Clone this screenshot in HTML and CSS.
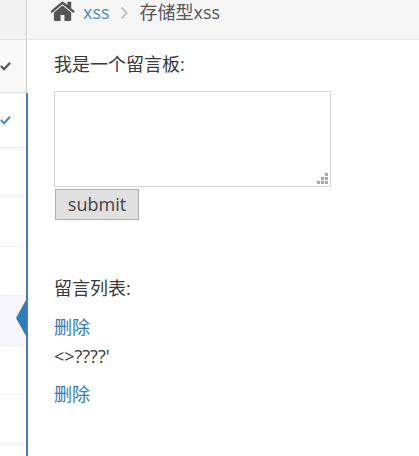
FILE: index.html
```html
<!DOCTYPE html>
<html lang="zh-CN">
<head>
  <meta charset="UTF-8" />
  <title>存储型xss</title>
  <link rel="stylesheet" href="styles.css">
</head>
<body>
  <div class="sidebar">
    <div class="side-top"></div>
    <div class="side-row side-parent">
      <svg class="check" viewBox="0 0 12 10"><path d="M1 5l3.500 3.500L11 1.500"/></svg>
    </div>
    <div class="submenu">
      <div class="side-row side-first">
        <svg class="check check-blue" viewBox="0 0 12 10"><path d="M1 5l3.500 3.500L11 1.500"/></svg>
      </div>
      <div class="side-row side-plain"></div>
      <div class="side-row side-plain"></div>
      <div class="side-row side-plain"></div>
      <div class="side-row side-active">
        <div class="arrow"></div>
      </div>
      <div class="side-row side-plain"></div>
      <div class="side-row side-plain"></div>
      <div class="side-row side-plain"></div>
    </div>
  </div>

  <div class="main">
    <div class="breadcrumbs">
      <svg class="home" viewBox="64 220 1664 1316"><path d="M1408 992v480q0 26-19 45t-45 19h-384v-384h-256v384h-384q-26 0-45-19t-19-45v-480q0-1 .5-3t.5-3l575-474 575 474q1 2 1 6zm223-69l-62 74q-8 9-21 11h-3q-13 0-21-7l-692-577-692 577q-12 8-24 7-13-2-21-11l-62-74q-8-10-7-23.500t11-21.500l719-599q32-26 76-26t76 26l244 204v-195q0-14 9-23t23-9h192q14 0 23 9t9 23v408l219 182q10 8 11 21.500t-7 23.500z"/></svg>
      <a class="crumb-link" href="#">xss</a>
      <svg class="crumb-sep" viewBox="0 0 8 14"><path d="M1.500 1.500L6.500 7l-5 5.500"/></svg>
      <span class="crumb-current">存储型xss</span>
    </div>

    <div class="content">
      <p class="label">我是一个留言板:</p>
      <div class="textarea-box">
        <textarea class="msg-input"></textarea>
        <svg class="grip" viewBox="0 0 11 11">
          <rect x="8" y="0" width="3" height="3"/>
          <rect x="4" y="4" width="3" height="3"/>
          <rect x="8" y="4" width="3" height="3"/>
          <rect x="0" y="8" width="3" height="3"/>
          <rect x="4" y="8" width="3" height="3"/>
          <rect x="8" y="8" width="3" height="3"/>
        </svg>
      </div>
      <button class="submit-btn">submit</button>

      <p class="list-title">留言列表:</p>
      <div class="msg">
        <a class="del" href="#">删除</a>
        <div class="msg-text">&lt;&gt;????'</div>
      </div>
      <div class="msg">
        <a class="del" href="#">删除</a>
      </div>
    </div>
  </div>
</body>
</html>
```

FILE: styles.css
```css
body {
  margin: 0;
  display: flex;
  height: 456px;
  overflow: hidden;
  background-color: #fff;
  font-family: "Open Sans", "Noto Sans CJK SC", sans-serif;
  font-size: 18px;
  color: #393939;
}

.sidebar {
  width: 28px;
  flex-shrink: 0;
  display: flex;
  flex-direction: column;
}

.side-top {
  height: 39px;
  flex-shrink: 0;
  margin-right: 1px;
  background-color: #f2f2f2;
  border-right: 1px solid #ccc;
  border-bottom: 1px solid #e0e0e0;
}

.side-row {
  box-sizing: border-box;
  position: relative;
  display: flex;
  align-items: center;
}

.side-parent {
  height: 53px;
  flex-shrink: 0;
  margin-right: 1px;
  background-color: #f8f8f8;
  border-right: 1px solid #ccc;
  border-bottom: 1px solid #e5e5e5;
}

.submenu {
  flex: 1;
  border-right: 2px solid #4a7fa5;
  overflow: hidden;
}

.side-first {
  height: 54.700px;
  border-bottom: 1px solid #ececec;
}

.side-plain {
  height: 49.500px;
  border-bottom: 1px solid #f0f0f0;
}

.side-active {
  height: 49.500px;
  background-color: #f5f5fb;
  border-bottom: 1px solid #f0f0f0;
}

.arrow {
  position: absolute;
  right: 0;
  top: 4px;
  width: 0;
  height: 0;
  border-style: solid;
  border-width: 18px 10px 18px 0;
  border-color: transparent #2b7dbc transparent transparent;
}

.check {
  width: 11px;
  height: 10px;
  fill: none;
  stroke: #555;
  stroke-width: 2.500;
}

.check-blue {
  stroke: #4c8fbd;
}

.main {
  flex: 1;
  min-width: 0;
}

.breadcrumbs {
  box-sizing: border-box;
  height: 40px;
  display: flex;
  align-items: flex-start;
  padding: 0 0 0 23px;
  background-color: #f5f5f5;
  border-bottom: 1px solid #e5e5e5;
}

.home {
  width: 25px;
  height: 20px;
  margin-top: 1px;
  fill: #555;
}

.crumb-link {
  margin-left: 7px;
  color: #4c8fbd;
  text-decoration: none;
  line-height: 25px;
}

.crumb-sep {
  width: 8px;
  height: 14px;
  margin: 6px 12px 0 10px;
  fill: none;
  stroke: #c4c4c4;
  stroke-width: 2;
}

.crumb-current {
  line-height: 25px;
  color: #555;
}

.content {
  padding-left: 26px;
}

.label {
  margin: 12px 0 0;
  line-height: 25px;
}

.textarea-box {
  position: relative;
  width: 277px;
  height: 98px;
  margin-top: 14px;
}

.msg-input {
  box-sizing: border-box;
  display: block;
  width: 277px;
  height: 96px;
  margin: 0;
  padding: 4px 6px;
  background-color: #fff;
  border: 1px solid #d5d5d5;
  border-radius: 0;
  resize: none;
  font-size: 18px;
}

.grip {
  position: absolute;
  right: 3px;
  bottom: 5px;
  width: 11px;
  height: 11px;
  fill: #a8a8a8;
}

.submit-btn {
  box-sizing: border-box;
  display: block;
  width: 84px;
  height: 31px;
  margin: 0 0 0 1px;
  padding: 0 0 2px;
  background-color: #e0e0e0;
  border: 1px solid #adadad;
  border-radius: 0;
  font-family: "Open Sans", sans-serif;
  font-size: 18px;
  color: #444;
}

.list-title {
  margin: 56px 0 14px;
  line-height: 25px;
}

.msg {
  margin-top: 13px;
}

.del {
  display: block;
  color: #337ab7;
  text-decoration: none;
  line-height: 25px;
}

.msg-text {
  margin-top: 4px;
  line-height: 25px;
}
```
